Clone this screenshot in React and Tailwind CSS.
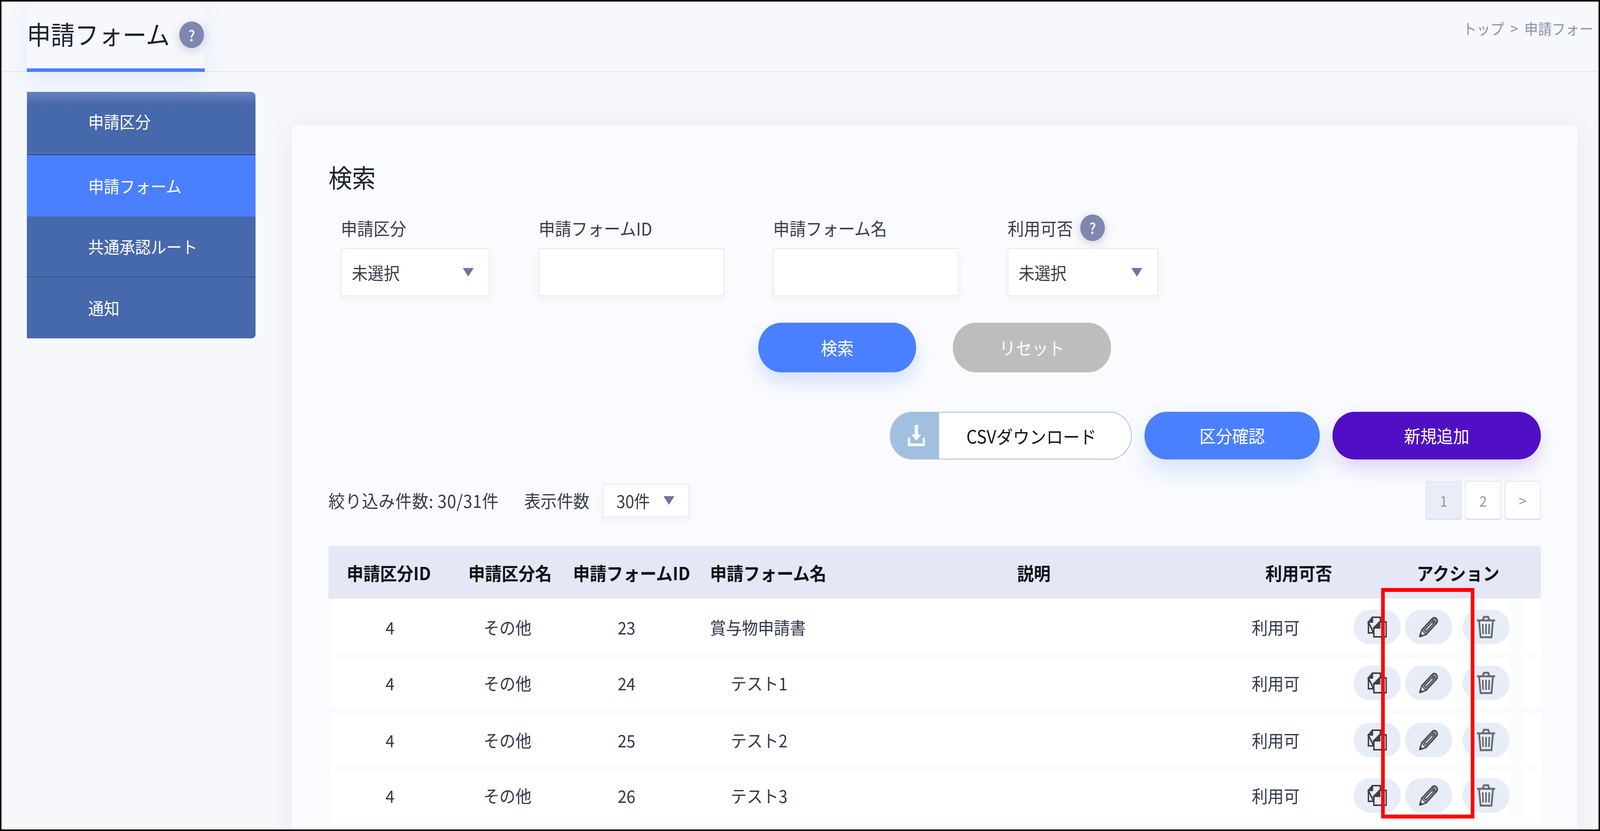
import React from "react";

// ブラウザの表示幅が 4408px に届かない場合は横方向だけ縮めて全体を収める
const fitX = typeof window !== "undefined" ? Math.min(1, window.innerWidth / 4408) : 1;

// テーブルの行データ
const rows = [
  { id: 23, name: "賞与物申請書", indent: "pl-[63px]", box: "h-[141px] pt-[4px]" },
  { id: 24, name: "テスト1", indent: "pl-[120px]", box: "h-[130px] mt-[10px]" },
  { id: 25, name: "テスト2", indent: "pl-[120px]", box: "h-[133px] mt-[14px]" },
  { id: 26, name: "テスト3", indent: "pl-[120px]", box: "h-[136px] mt-[11px] pb-[6px]" },
];

const menu = [
  { label: "申請区分", box: "h-[162px] bg-linear-to-b from-[#6a84bf] to-[#4668ac] to-[22%] rounded-tr-[12px] border-b-[3px] border-[#2f4a80] shadow-[inset_0_-3px_0_#5876b5] pb-[8px]" },
  { label: "申請フォーム", box: "h-[157px] bg-[#4a80ff]" },
  { label: "共通承認ルート", box: "h-[155px] bg-[#4668ac] border-b-[2px] border-[#2f4a80] shadow-[inset_0_-2px_0_#5876b5]" },
  { label: "通知", box: "h-[157px] bg-[#4668ac] rounded-br-[10px]" },
];

function HelpBadge() {
  return (
    <span className="flex h-[68px] w-[68px] items-center justify-center rounded-full bg-[#7f86b0] text-[38px] font-medium text-white shadow-[0_6px_24px_rgba(70,70,110,0.25)]">
      ?
    </span>
  );
}

function Caret() {
  return (
    <svg width="30" height="22" viewBox="0 0 30 22" className="shrink-0">
      <path d="M0 0 H30 L15 22 Z" fill="#6b74a6" />
    </svg>
  );
}

function CopyIcon() {
  return (
    <svg width="54" height="54" viewBox="0 0 54 54" fill="none" stroke="#3f4145" strokeWidth="4">
      <path d="M14 2 H36 V13 M17 42 H3 V14 Z" />
      <path d="M3 14 L14 2 V14 Z" fill="#3f4145" />
      <path d="M34 14 H52 V52 H18 V29 Z" fill="#e7edf7" />
      <path d="M18 29 L34 14 V29 Z" fill="#3f4145" />
    </svg>
  );
}

function PencilIcon() {
  return (
    <svg width="52" height="52" viewBox="0 0 52 52" fill="none" stroke="#46484c" strokeWidth="3.5">
      <path d="M1 51 L7 33 L19 45 Z" fill="#e7edf7" />
      <path d="M1 51 L3 44 L8 49 Z" fill="#46484c" />
      <path d="M7 33 L35 5 Q41 -1 47 4 L48 5 Q53 11 47 17 L19 45" fill="#8b8e93" />
      <path d="M15 33 L35 13 L39 17 L19 37 Z" fill="#e7edf7" strokeWidth="2.5" />
      <path d="M36 7 L45 16" />
    </svg>
  );
}

function TrashIcon() {
  return (
    <svg width="52" height="58" viewBox="0 0 52 58" fill="none" stroke="#696b70" strokeWidth="5">
      <path d="M1 12 H51" />
      <path d="M17 11 L20 3 H32 L35 11" />
      <path d="M7 14 L11 55 H41 L45 14" />
      <path d="M17 21 L18 47 M26 21 V47 M35 21 L34 47" strokeWidth="4.5" />
    </svg>
  );
}

function DownloadIcon() {
  return (
    <svg width="47" height="54" viewBox="0 0 47 54" fill="#ffffff">
      <path d="M19 0 H28 V24 H37 L23.5 40 L10 24 H19 Z" />
      <path d="M0 32 H6 V47 H41 V32 H47 V54 H0 Z" />
    </svg>
  );
}

function Field({ label, width, help, children }) {
  return (
    <div className={`flex flex-col ${width}`}>
      <div className="flex h-[46px] items-center gap-[20px] whitespace-nowrap text-[45px] leading-none text-[#3a3d4a]">
        {label}
        {help && <HelpBadge />}
      </div>
      <div className="mt-[29px] flex h-[123px] items-center justify-between border-2 border-[#e6e7ea] bg-white pl-[28px] pr-[42px] text-[44px] text-[#3a3d4a] shadow-[0_10px_20px_rgba(60,60,90,0.04)]">
        {children}
      </div>
    </div>
  );
}

function PagerButton({ label, active }) {
  return (
    <div
      className={`flex h-[100px] w-[100px] items-center justify-center rounded-[6px] border-2 border-b-[4px] border-[#dde2ee] text-[38px] text-[#9a9a9a] ${active ? "bg-[#e9edf7]" : "bg-white"}`}
    >
      {label}
    </div>
  );
}

function ActionButtons() {
  const pill = "flex h-[88px] w-[130px] items-center justify-center rounded-full bg-[#e7edf7]";
  return (
    <div className="flex items-center">
      <div className={pill}>
        <CopyIcon />
      </div>
      <div className={`${pill} ml-[12px]`}>
        <PencilIcon />
      </div>
      <div className={`${pill} ml-[28px]`}>
        <TrashIcon />
      </div>
    </div>
  );
}

export default function App() {
  return (
    <div className="h-[2127px] w-full overflow-hidden">
      <div
        className="relative flex h-[2127px] w-[4408px] origin-top-left flex-col overflow-hidden border-[4px] border-black bg-[#f6f8fc] font-['Noto_Sans_CJK_JP','Liberation_Sans',sans-serif]"
        style={{ transform: `scaleX(${fitX})` }}
      >
        {/* ヘッダー */}
        <header className="flex h-[180px] shrink-0 items-start justify-between border-b-[2px] border-[#e0e4ee] pl-[70px]">
          <div className="flex h-[180px] w-[490px] items-start border-b-[9px] border-[#4a80ff] pt-[46px] shadow-[0_24px_50px_rgba(74,128,255,0.1)]">
            <h1 className="whitespace-nowrap text-[66px] font-normal leading-[70px] text-[#1c2033]">申請フォーム</h1>
            <span className="ml-[26px] mt-[5px] shrink-0">
              <HelpBadge />
            </span>
          </div>
          <div className="w-[374px] shrink-0 whitespace-nowrap pt-[46px] text-[38px] leading-[44px] text-[#8a93a8]">
            トップ &nbsp;&gt;&nbsp; 申請フォー
          </div>
        </header>

        <div className="flex items-start pl-[70px]">
          {/* サイドメニュー */}
          <nav className="mt-[51px] flex w-[630px] shrink-0 flex-col">
            {menu.map((m) => (
              <div key={m.label} className={`flex items-center pl-[169px] text-[43px] text-white ${m.box}`}>
                {m.label}
              </div>
            ))}
          </nav>

          {/* メインカード */}
          <main className="ml-[100px] mt-[136px] h-[1900px] w-[3542px] shrink-0 rounded-t-[14px] bg-[#fafbfe] pl-[101px] pr-[101px] pt-[99px] shadow-[0_0_70px_rgba(60,70,120,0.08)]">
            <h2 className="text-[65px] font-normal leading-[66px] text-[#1c2033]">検索</h2>

            <div className="mt-[75px] flex gap-[135px] pl-[34px]">
              <Field label="申請区分" width="w-[410px]">
                未選択
                <Caret />
              </Field>
              <Field label="申請フォームID" width="w-[511px]" />
              <Field label="申請フォーム名" width="w-[511px]" />
              <Field label="利用可否" width="w-[415px]" help>
                未選択
                <Caret />
              </Field>
            </div>

            <div className="ml-[1184px] mt-[68px] flex gap-[101px]">
              <button className="h-[127px] w-[435px] rounded-full bg-[#4a80ff] text-[45px] text-white shadow-[0_24px_50px_rgba(74,128,255,0.22)]">
                検索
              </button>
              <button className="h-[127px] w-[436px] rounded-full bg-[#bdbdbd] text-[45px] text-white">リセット</button>
            </div>

            <div className="mt-[101px] flex h-[122px] justify-end gap-[35px]">
              <div className="flex w-[667px] overflow-hidden rounded-full border-2 border-[#a1bfdf] bg-white">
                <div className="flex w-[134px] items-center justify-center bg-[#a1bfdf] pl-[8px]">
                  <DownloadIcon />
                </div>
                <div className="flex flex-1 items-center justify-center pr-[20px] text-[46px] text-[#14151a]">CSVダウンロード</div>
              </div>
              <button className="w-[483px] rounded-full bg-[#4a80ff] text-[45px] text-white shadow-[0_30px_60px_rgba(74,128,255,0.2)]">
                区分確認
              </button>
              <button className="w-[574px] rounded-full bg-[#500fc5] text-[45px] text-white shadow-[0_24px_50px_rgba(80,15,197,0.16)]">
                新規追加
              </button>
            </div>

            <div className="mt-[55px] flex h-[100px] items-center text-[45px] text-[#3a3d4a]">
              <span className="tracking-[1px]">絞り込み件数: 30/31件</span>
              <span className="ml-[70px]">表示件数</span>
              <div className="ml-[36px] flex h-[85px] w-[239px] items-center justify-between border-2 border-[#e6e7ea] bg-white pl-[36px] pr-[39px] text-[44px] shadow-[0_10px_20px_rgba(60,60,90,0.04)]">
                30件
                <Caret />
              </div>
              <div className="ml-auto flex gap-[9px]">
                <PagerButton label="1" active />
                <PagerButton label="2" />
                <PagerButton label=">" />
              </div>
            </div>

            {/* 一覧テーブル */}
            <div className="mt-[67px] w-[3340px]">
              <div className="grid h-[134px] grid-cols-[332px_336px_334px_533px_816px_644px_234px_111px] items-center bg-[#e4e7f5] text-center text-[46px] font-bold leading-none text-[#101218]">
                <div>申請区分ID</div>
                <div>申請区分名</div>
                <div>申請フォームID</div>
                <div className="pl-[49px] text-left">申請フォーム名</div>
                <div>説明</div>
                <div>利用可否</div>
                <div className="whitespace-nowrap">アクション</div>
                <div />
              </div>
              {rows.map((r) => (
                <div
                  key={r.id}
                  className={`ml-[7px] grid grid-cols-[325px_322px_334px_533px_874px_429px_430px_auto] items-center bg-white text-center text-[44px] leading-none text-[#33394f] ${r.box}`}
                >
                  <div>4</div>
                  <div>その他</div>
                  <div>{r.id}</div>
                  <div className={`text-left ${r.indent}`}>{r.name}</div>
                  <div />
                  <div>利用可</div>
                  <ActionButtons />
                  <div className="h-full w-[42px] -translate-x-[1px] bg-[#fbfcfe]" />
                </div>
              ))}
            </div>
          </main>
        </div>

        {/* 赤枠の注釈 */}
        <div className="absolute left-[3801px] top-[1501px] h-[590px] w-[257px] border-[10px] border-[#ff0000]" />
      </div>
    </div>
  );
}
